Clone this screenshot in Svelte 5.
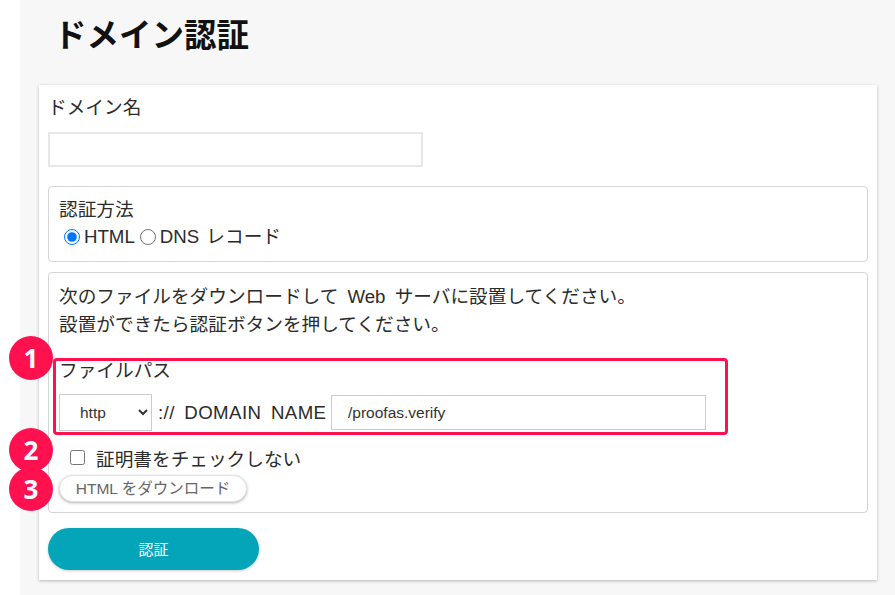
<script>
let domain = "";
let method = "html";
let scheme = "http";
let path = "/proofas.verify";
let skipCert = false;
</script>

<div class="page">
	<h1>ドメイン認証</h1>
	<div class="card">
		<div class="label">ドメイン名</div>
		<input class="domain" type="text" bind:value={domain} />

		<div class="box method">
			<div>認証方法</div>
			<div class="radios">
				<input type="radio" id="m-html" value="html" bind:group={method} /><label for="m-html">HTML</label>
				<input type="radio" id="m-dns" value="dns" bind:group={method} /><label for="m-dns">DNS レコード</label>
			</div>
		</div>

		<div class="box file">
			<p>次のファイルをダウンロードして Web サーバに設置してください。<br />設置ができたら認証ボタンを押してください。</p>

			<div class="path-area">
				<span class="badge b1">1</span>
				<div class="path-title">ファイルパス</div>
				<div class="path-row">
					<select bind:value={scheme}>
						<option value="http">http</option>
						<option value="https">https</option>
					</select>
					<span class="domain-name">:// DOMAIN NAME</span>
					<input class="path" type="text" bind:value={path} />
				</div>
			</div>

			<label class="cert">
				<span class="badge b2">2</span>
				<input type="checkbox" bind:checked={skipCert} />
				<span>証明書をチェックしない</span>
			</label>

			<div class="download-row">
				<span class="badge b3">3</span>
				<button class="download">HTML をダウンロード</button>
			</div>
		</div>

		<button class="submit">認証</button>
	</div>
</div>

<style>
	:global(body) {
		margin: 0;
		background: #fff;
	}

	.page {
		margin-left: 20px;
		height: 595px;
		box-sizing: border-box;
		padding: 15px 18px 0 19px;
		background: #f7f7f7;
		color: #2b2b2b;
		font-family: "Liberation Sans", "Noto Sans CJK JP", sans-serif;
		font-size: 18.67px;
		word-spacing: 4px;
	}

	h1 {
		margin: 0 0 0 15px;
		height: 70px;
		font-size: 32.5px;
		line-height: 42px;
		font-weight: 700;
		color: #111;
	}

	.card {
		height: 495px;
		box-sizing: border-box;
		padding: 10px 9px 0;
		background: #fff;
		box-shadow: 0 1px 3px rgba(0, 0, 0, 0.25);
	}

	.label {
		line-height: 26px;
	}

	.domain {
		display: block;
		box-sizing: border-box;
		width: 375px;
		height: 35px;
		margin: 11px 0 19px;
		border: 2px solid #e8e8e8;
		background: #fff;
	}

	.box {
		box-sizing: border-box;
		border: 1px solid #d4d4d4;
		border-radius: 4px;
	}

	.method {
		height: 76px;
		margin-bottom: 10px;
		padding: 10px 10px 0;
		line-height: 26px;
		word-spacing: 2px;
	}

	.radios {
		display: flex;
		align-items: center;
		padding-left: 5px;
		height: 28px;
	}

	.radios input {
		width: 16px;
		height: 16px;
		margin: 0 4px 0 0;
		accent-color: #0075ff;
	}

	.radios label {
		margin-right: 5px;
	}

	.file {
		height: 241px;
		padding: 0 5px;
	}

	.file p {
		margin: 10px 0 0 5px;
		line-height: 28px;
	}

	.path-area {
		position: relative;
		box-sizing: border-box;
		width: 675px;
		height: 77px;
		margin: 19px 0 0 -1px;
		border: 3px solid #ff1150;
		border-radius: 4px;
		padding: 0 3px;
	}

	.path-title {
		line-height: 19px;
	}

	.path-row {
		display: flex;
		align-items: center;
		margin-top: 14px;
	}

	select {
		flex: none;
		box-sizing: border-box;
		width: 93px;
		height: 37px;
		padding-left: 16px;
		border: 1px solid #ccc;
		background: #fff;
		font-family: "Liberation Sans", sans-serif;
		font-size: 15.5px;
		color: #333;
	}

	.domain-name {
		flex: none;
		width: 173px;
		margin: 0 0 0 6px;
		white-space: nowrap;
		letter-spacing: 0.4px;
	}

	.path {
		flex: none;
		box-sizing: border-box;
		width: 375px;
		height: 35px;
		padding-left: 16px;
		border: 1px solid #ccc;
		font-family: "Liberation Sans", sans-serif;
		font-size: 15.5px;
		color: #333;
	}

	.cert {
		position: relative;
		display: flex;
		align-items: center;
		height: 26px;
		margin-top: 9px;
		padding-left: 16px;
	}

	.cert input {
		width: 15px;
		height: 15px;
		margin: 0 11px 0 0;
	}

	.download-row {
		position: relative;
		margin-top: 5px;
	}

	.download {
		display: block;
		box-sizing: border-box;
		width: 188px;
		height: 27px;
		margin-left: 5px;
		padding: 0 0 3px;
		border: 1px solid #e2e2e2;
		border-radius: 14px;
		background: #fff;
		box-shadow: 0 1px 3px rgba(0, 0, 0, 0.3);
		font-family: "Liberation Sans", "Noto Sans CJK JP", sans-serif;
		font-size: 15.5px;
		word-spacing: 0;
		color: #666;
	}

	.submit {
		display: block;
		width: 211px;
		height: 42px;
		margin-top: 15px;
		padding: 0 0 2px;
		border: none;
		border-radius: 21px;
		background: #04a5b8;
		box-shadow: 0 1px 3px rgba(0, 0, 0, 0.2);
		font-family: "Liberation Sans", "Noto Sans CJK JP", sans-serif;
		font-size: 15px;
		color: #fff;
	}

	.badge {
		position: absolute;
		width: 44px;
		height: 44px;
		border-radius: 50%;
		background: #ff1150;
		color: #fff;
		font-family: "Open Sans", sans-serif;
		font-size: 26px;
		font-weight: 700;
		line-height: 44px;
		text-align: center;
		z-index: 1;
	}

	.b1 {
		left: -47px;
		top: -25px;
	}

	.b2 {
		left: -45px;
		top: -16px;
	}

	.b3 {
		left: -45px;
		top: -8px;
	}
</style>
